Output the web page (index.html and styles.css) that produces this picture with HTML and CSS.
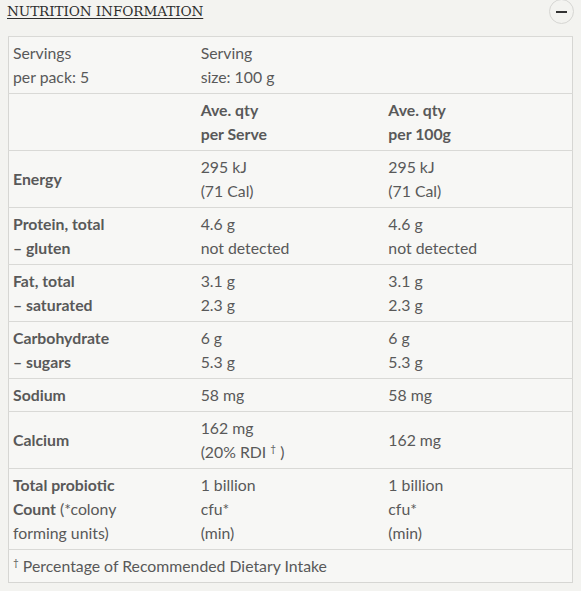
FILE: index.html
```html
<!DOCTYPE html>
<html>
<head>
<meta charset="utf-8">
<link rel="stylesheet" href="styles.css">
</head>
<body>
<div class="panel">
  <div class="panel-head">
    <h2 class="panel-title">NUTRITION INFORMATION</h2>
    <span class="toggle"><span class="toggle-bar"></span></span>
  </div>
  <table class="nutri">
    <tr>
      <td>Servings<br>per pack: 5</td>
      <td>Serving<br>size: 100 g</td>
      <td></td>
    </tr>
    <tr>
      <td></td>
      <td class="b">Ave. qty<br>per Serve</td>
      <td class="b">Ave. qty<br>per 100g</td>
    </tr>
    <tr>
      <td class="b">Energy</td>
      <td>295 kJ<br>(71 Cal)</td>
      <td>295 kJ<br>(71 Cal)</td>
    </tr>
    <tr>
      <td class="b">Protein, total<br>– gluten</td>
      <td>4.6 g<br>not detected</td>
      <td>4.6 g<br>not detected</td>
    </tr>
    <tr>
      <td class="b">Fat, total<br>– saturated</td>
      <td>3.1 g<br>2.3 g</td>
      <td>3.1 g<br>2.3 g</td>
    </tr>
    <tr>
      <td class="b">Carbohydrate<br>– sugars</td>
      <td>6 g<br>5.3 g</td>
      <td>6 g<br>5.3 g</td>
    </tr>
    <tr>
      <td class="b">Sodium</td>
      <td>58 mg</td>
      <td>58 mg</td>
    </tr>
    <tr>
      <td class="b">Calcium</td>
      <td>162 mg<br>(20% RDI <sup>†</sup> )</td>
      <td>162 mg</td>
    </tr>
    <tr>
      <td><b>Total probiotic<br>Count</b> (*colony<br>forming units)</td>
      <td>1 billion<br>cfu*<br>(min)</td>
      <td>1 billion<br>cfu*<br>(min)</td>
    </tr>
    <tr>
      <td colspan="3"><sup>†</sup> Percentage of Recommended Dietary Intake</td>
    </tr>
  </table>
</div>
</body>
</html>
```

FILE: styles.css
```css
html, body {
  margin: 0;
  padding: 0;
  background: #f3f3f0;
}
.panel {
  padding: 0 9px 0 8px;
  font-family: Lato, "Liberation Sans", sans-serif;
  color: #595959;
}
.panel-head {
  display: flex;
  justify-content: space-between;
  align-items: flex-start;
  height: 36px;
}
.panel-title {
  margin: 2px 0 0 -1px;
  font-family: "DejaVu Serif", "Liberation Serif", serif;
  font-weight: normal;
  font-size: 13.6px;
  line-height: 18px;
  color: #2e2e2e;
  text-decoration: underline;
  text-underline-offset: 2px;
  letter-spacing: -0.1px;
}
.toggle {
  width: 25px;
  height: 25px;
  margin: -1px -2px 0 0;
  border: 1px solid #d6d6d3;
  border-radius: 50%;
  display: flex;
  align-items: center;
  justify-content: center;
  box-sizing: border-box;
}
.toggle-bar {
  width: 11px;
  height: 2px;
  background: #333;
}
.nutri {
  width: 565px;
  border-collapse: collapse;
  table-layout: fixed;
  background: #f7f7f5;
  border: 1px solid #d6d6d3;
  font-size: 15.8px;
  line-height: 24px;
}
.nutri td {
  padding: 4px 4px 4px;
  vertical-align: middle;
  border-top: 1px solid #d9d9d6;
  width: 33.33%;
}
.nutri .b, .nutri b {
  font-weight: bold;
}
.nutri sup {
  font-size: 10px;
  line-height: 0;
  vertical-align: 6px;
}
```
